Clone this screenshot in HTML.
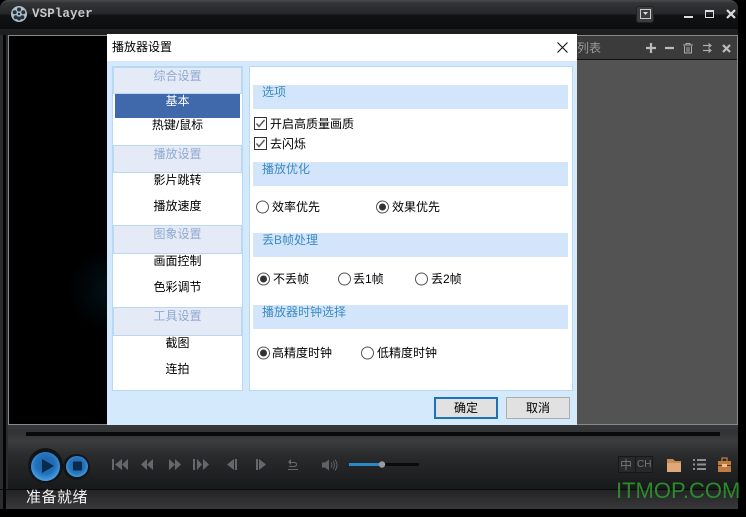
<!DOCTYPE html>
<html>
<head>
<meta charset="utf-8">
<style>
html,body{margin:0;padding:0;background:#000}
body{width:746px;height:517px;position:relative;overflow:hidden;font:12px "Liberation Sans","WenQuanYi Zen Hei","Noto Sans CJK SC",sans-serif;color:#000}
div,span{position:absolute;box-sizing:border-box}
.t{white-space:nowrap;line-height:14px}
.c{text-align:center}
.h{background:#e4ebf6;border:1px solid #b9d9f3;left:113px;width:129px;color:#8fa9d2;text-align:center;font-size:12px;line-height:17px}
.r{background:#d3e5fb;left:253px;width:315px;height:24px;color:#3d8bc0;font-size:12px;line-height:15px;padding-left:9px}
svg{position:absolute;overflow:visible}
</style>
</head>
<body>
<!-- window -->
<div style="left:0;top:0;width:738px;height:509px;background:#2b2c2e;border-radius:8px 8px 0 0"></div>
<div style="left:0;top:0;width:738px;height:29px;background:linear-gradient(#4a4b4d 0,#333436 3px,#26272a 14px,#111214 15px,#0c0d0e 29px);border-radius:8px 8px 0 0"></div>
<div style="left:0;top:29px;width:738px;height:6px;background:#1d1e20"></div>
<div style="left:0;top:35px;width:3px;height:474px;background:#2b2c2e"></div>
<div style="left:3px;top:35px;width:3px;height:474px;background:#050505"></div>
<!-- logo -->
<svg style="left:10px;top:5px" width="18" height="18" viewBox="0 0 18 18">
<circle cx="9" cy="9" r="8" fill="#aebfcb"/>
<circle cx="9" cy="4.5" r="2" fill="#26323a"/><circle cx="9" cy="13.5" r="2" fill="#26323a"/>
<circle cx="4.7" cy="7.2" r="2" fill="#26323a"/><circle cx="13.3" cy="7.2" r="2" fill="#26323a"/>
<circle cx="5.7" cy="12.2" r="2" fill="#26323a"/><circle cx="12.3" cy="12.2" r="2" fill="#26323a"/>
<circle cx="9" cy="9" r="1.2" fill="#26323a"/>
</svg>
<div class="t" style="left:32px;top:7px;color:#c8c8c8;font:bold 12.5px/14px 'Liberation Mono',monospace;letter-spacing:.1px">VSPlayer</div>
<!-- window buttons -->
<div style="left:636px;top:6px;width:18px;height:17px;background:#3c3d3e;border-radius:3px;border:1px solid #222"></div>
<div style="left:640px;top:9px;width:11px;height:10px;border:1px solid #ccc"></div>
<svg style="left:642px;top:12px" width="7" height="4"><path d="M1 0H6L3.5 3Z" fill="#ddd"/></svg>
<div style="left:684px;top:16px;width:9px;height:2px;background:#ddd"></div>
<div style="left:705px;top:10px;width:9px;height:8px;border:2px solid #ddd;border-width:2px 1px 1px"></div>
<svg style="left:726px;top:9px" width="10" height="10"><path d="M1 1L9 9M9 1L1 9" stroke="#ddd" stroke-width="2.2"/></svg>
<!-- video frame -->
<div style="left:8px;top:35px;width:730px;height:390px;background:#000;border:1px solid #8a8a8a"></div>
<div style="left:577px;top:36px;width:160px;height:24px;background:#3b3b3b;border-bottom:1px solid #111"></div>
<div style="left:577px;top:60px;width:160px;height:364px;background:#535353"></div>
<div style="left:70px;top:250px;width:40px;height:80px;background:radial-gradient(ellipse at right,#021018 0,#000 75%)"></div>
<div class="t" style="left:577px;top:41px;color:#9a9a9a">列表</div>
<svg style="left:645px;top:42px" width="92" height="13">
<path d="M1 6H11M6 1V11" stroke="#bbb" stroke-width="2.2" fill="none"/>
<path d="M20 6H29" stroke="#bbb" stroke-width="2.2" fill="none"/>
<path d="M38 3H48M41 3V1.5H45V3M39.5 4V11H46.5V4M42 5V10M44 5V10" stroke="#aaa" stroke-width="1" fill="none"/>
<path d="M58 3.5H66M63.5 1.5L66 3.5L63.5 5.5M58 8.5H66M63.5 6.5L66 8.5L63.5 10.5" stroke="#aaa" stroke-width="1.2" fill="none"/>
<path d="M78 3L85 10M85 3L78 10" stroke="#bbb" stroke-width="2.2" fill="none"/>
</svg>
<!-- dialog -->
<div style="left:107px;top:34px;width:470px;height:391px;background:#d5e9fc"></div>
<div style="left:107px;top:34px;width:470px;height:27px;background:#fff"></div>
<div class="t" style="left:112px;top:40px">播放器设置</div>
<svg style="left:557px;top:42px" width="11" height="11"><path d="M.5 .5L10.5 10.5M10.5 .5L.5 10.5" stroke="#111" stroke-width="1.1"/></svg>
<!-- left panel -->
<div style="left:112px;top:66px;width:131px;height:325px;background:#fff;border:1px solid #b9d9f3"></div>
<div class="h" style="top:67px;height:27px">综合设置</div>
<div class="t c" style="left:115px;top:94px;width:125px;height:24px;background:#3f69aa;color:#fff;line-height:15px">基本</div>
<div class="t c" style="left:113px;top:118px;width:129px">热键/鼠标</div>
<div class="h" style="top:145px;height:28px">播放设置</div>
<div class="t c" style="left:113px;top:173px;width:129px">影片跳转</div>
<div class="t c" style="left:113px;top:199px;width:129px">播放速度</div>
<div class="h" style="top:225px;height:29px">图象设置</div>
<div class="t c" style="left:113px;top:254px;width:129px">画面控制</div>
<div class="t c" style="left:113px;top:280px;width:129px">色彩调节</div>
<div class="h" style="top:307px;height:29px">工具设置</div>
<div class="t c" style="left:113px;top:336px;width:129px">截图</div>
<div class="t c" style="left:113px;top:362px;width:129px">连拍</div>
<!-- right panel -->
<div style="left:249px;top:66px;width:324px;height:325px;background:#fff;border:1px solid #b9d9f3"></div>
<div class="r" style="top:85px">选项</div>
<div class="r" style="top:162px">播放优化</div>
<div class="r" style="top:233px">丢B帧处理</div>
<div class="r" style="top:305px">播放器时钟选择</div>

<svg style="left:254px;top:117px" width="13" height="33">
<rect x=".5" y=".5" width="12" height="12" fill="#fff" stroke="#333"/>
<path d="M2.5 6.5L5 9.5L10.5 3" stroke="#555" stroke-width="1.4" fill="none"/>
<rect x=".5" y="20.5" width="12" height="12" fill="#fff" stroke="#333"/>
<path d="M2.5 26.5L5 29.5L10.5 23" stroke="#555" stroke-width="1.4" fill="none"/>
</svg>
<div class="t" style="left:270px;top:117px">开启高质量画质</div>
<div class="t" style="left:270px;top:137px">去闪烁</div>

<svg style="left:0;top:0" width="746" height="517">
<g fill="#fff" stroke="#555" stroke-width="1">
<circle cx="262.500" cy="207" r="6"/><circle cx="382.500" cy="207" r="6"/>
<circle cx="263.500" cy="279" r="6"/><circle cx="344.500" cy="279" r="6"/><circle cx="421.500" cy="279" r="6"/>
<circle cx="263.500" cy="353" r="6"/><circle cx="367.500" cy="353" r="6"/>
</g>
<g fill="#333">
<circle cx="382.500" cy="207" r="3.500"/><circle cx="263.500" cy="279" r="3.500"/><circle cx="263.500" cy="353" r="3.500"/>
</g>
</svg>
<div class="t" style="left:272px;top:200px">效率优先</div>
<div class="t" style="left:392px;top:200px">效果优先</div>
<div class="t" style="left:273px;top:272px">不丢帧</div>
<div class="t" style="left:353px;top:272px">丢1帧</div>
<div class="t" style="left:431px;top:272px">丢2帧</div>
<div class="t" style="left:272px;top:346px">高精度时钟</div>
<div class="t" style="left:377px;top:346px">低精度时钟</div>
<!-- buttons -->
<div class="t c" style="left:434px;top:397px;width:64px;height:22px;background:#e1e1e1;border:2px solid #1a72b8;line-height:18px">确定</div>
<div class="t c" style="left:506px;top:397px;width:64px;height:22px;background:#e1e1e1;border:1px solid #adadad;line-height:20px">取消</div>
<!-- bottom bar -->
<div style="left:8px;top:425px;width:730px;height:64px;background:linear-gradient(#37383a 0,#323335 8px,#3c3d3f 16px,#2a2b2d 30px,#18191b 64px)"></div>
<div style="left:0;top:489px;width:738px;height:1px;background:#0a0a0a"></div>
<div style="left:6px;top:490px;width:732px;height:19px;background:linear-gradient(#232325,#39393b)"></div>
<div style="left:26px;top:432px;width:694px;height:4px;background:#0a0a0a"></div>
<!-- play / stop -->
<div style="left:28px;top:448px;width:35px;height:35px;border-radius:50%;background:#121417"></div>
<div style="left:63px;top:454px;width:27px;height:26px;border-radius:50%;background:#121417"></div>
<div style="left:31px;top:452px;width:29px;height:29px;border-radius:50%;background:radial-gradient(circle at 50% 42%,#1f5f9e 0,#2272bd 45%,#4ea6ea 78%,#a6d6f7 100%)"></div>
<div style="left:66px;top:456px;width:22px;height:21px;border-radius:50%;background:radial-gradient(circle at 50% 45%,#1f5f9e 0,#2476c0 50%,#5ab2ee 88%,#a6d6f7 100%)"></div>
<svg style="left:0;top:420px" width="300" height="97">
<path d="M42 39V53L54 46Z" fill="#0c2a4c"/>
<rect x="73" y="41.500" width="9" height="9" rx="1" fill="#0c2a4c"/>
<g fill="#65686b">
<path d="M112 39h2v11h-2zM122 39v11l-7-5.500zM128 39v11l-6-5.500z"/>
<path d="M147 39v11l-6-5.500zM153 39v11l-6-5.500z"/>
<path d="M169 39v11l6-5.500zM175 39v11l6-5.500z"/>
<path d="M193 39h2v11h-2zM197 39v11l5-5.500zM203 39v11l6-5.500z"/>
<path d="M234 39v11l-7-5.500zM235 39h2v11h-2z"/>
<path d="M256 39h2v11h-2zM259 39v11l7-5.500z"/>
<path d="M291 39v3h3c2 0 3 1 3 2.500s-1 2.500-3 2.500h-5v-1h5c1 0 2 -.5 2-1.500s-1-1.500-2-1.500h-3v2l-3-3zM288 49h10v1h-10z"/>
</g>
</svg>
<svg style="left:320px;top:458px" width="100" height="14">
<path d="M2 4.500h3l4-3v11l-4-3H2z" fill="#5f6265"/>
<path d="M11 4.500q2 2.500 0 5M13 3q3 4 0 8M15 1.500q4 5.500 0 11" stroke="#5f6265" fill="none"/>
<rect x="29" y="5" width="70" height="3" rx="1.500" fill="#0a0a0a"/>
<rect x="29" y="5" width="33" height="3" fill="#2a8ac8"/>
<circle cx="62" cy="6.500" r="3.200" fill="#9a9c9e"/>
</svg>
<!-- lang -->
<div style="left:618px;top:456px;width:35px;height:17px;background:#26282a;border:1px solid #17181a"></div>
<div style="left:635px;top:456px;width:1px;height:17px;background:#17181a"></div>
<div class="t" style="left:620px;top:458px;color:#777">中</div>
<div class="t" style="left:637px;top:458px;color:#777;font-size:10px">CH</div>
<svg style="left:666px;top:456px" width="68" height="18">
<path d="M1 3h6l2 2h6v11H1z" fill="#c58a55"/><path d="M1 7h14v9H1z" fill="#e0a878"/>
<g fill="#8e9092"><rect x="27" y="3" width="2" height="2"/><rect x="27" y="7.500" width="2" height="2"/><rect x="27" y="12" width="2" height="2"/><rect x="31" y="3" width="9" height="2"/><rect x="31" y="7.500" width="9" height="2"/><rect x="31" y="12" width="9" height="2"/></g>
<rect x="52" y="5" width="13" height="11" fill="#bf7c42"/><path d="M56 5V2h5v3" stroke="#bf7c42" fill="none" stroke-width="1.300"/><path d="M52 9.500h13" stroke="#5e3a18"/><rect x="56" y="8" width="5" height="3" fill="#f0c090"/>
</svg>
<!-- status -->
<div class="t" style="left:26px;top:489px;color:#f0f0f0;font-size:15px;line-height:17px;letter-spacing:.5px">准备就绪</div>
<!-- watermark -->
<div class="t" style="left:616px;top:480px;color:#2b8a2b;font-size:22px;line-height:22px">ITMOP.COM</div>
</body>
</html>
